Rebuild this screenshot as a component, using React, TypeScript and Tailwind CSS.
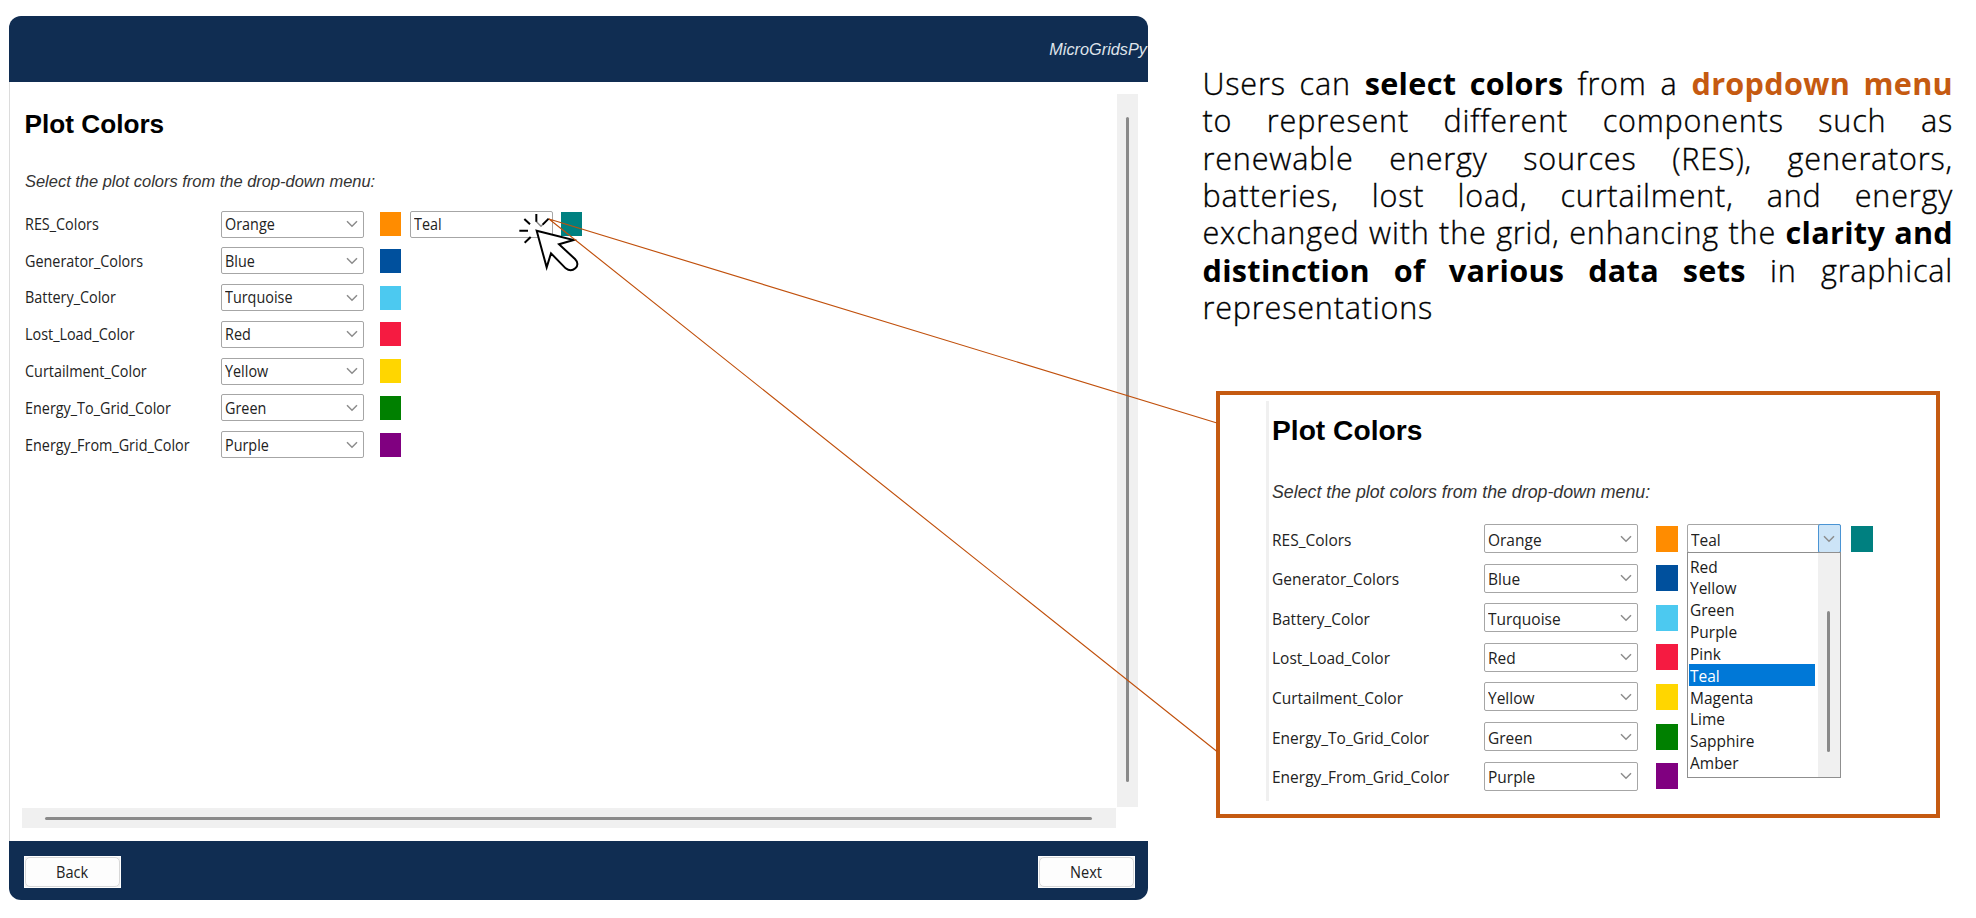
import type { ReactNode } from 'react';

const rows = [
  { label: 'RES_Colors', value: 'Orange', swatch: 'bg-[#ff8c00]' },
  { label: 'Generator_Colors', value: 'Blue', swatch: 'bg-[#00509d]' },
  { label: 'Battery_Color', value: 'Turquoise', swatch: 'bg-[#4cc9f0]' },
  { label: 'Lost_Load_Color', value: 'Red', swatch: 'bg-[#f51b41]' },
  { label: 'Curtailment_Color', value: 'Yellow', swatch: 'bg-[#ffd600]' },
  { label: 'Energy_To_Grid_Color', value: 'Green', swatch: 'bg-[#008000]' },
  { label: 'Energy_From_Grid_Color', value: 'Purple', swatch: 'bg-[#800080]' },
];

const options = ['Red', 'Yellow', 'Green', 'Purple', 'Pink', 'Teal', 'Magenta', 'Lime', 'Sapphire', 'Amber'];

function Label({ text }: { text: string }) {
  return <span className="inline-block origin-left scale-x-[0.928] whitespace-nowrap pt-px">{text}</span>;
}

function Chevron() {
  return (
    <svg className="h-[8px] w-[12px] shrink-0" viewBox="0 0 12 8" fill="none" stroke="#8c8c8c" strokeWidth="1.5">
      <path d="M1 1.3 6 6.3 11 1.3" />
    </svg>
  );
}

function Select({ value, large = false, open = false }: { value: string; large?: boolean; open?: boolean }) {
  return (
    <div
      className={
        'flex items-center justify-between rounded-[2px] border-[1.5px] border-[#a6a6a6] bg-white pl-[3px] ' +
        (large ? 'h-[29px] w-[154px]' : 'h-[27px] w-[143px]')
      }
    >
      <Label text={value} />
      {open ? (
        <div className="-my-px -mr-px flex h-[29px] w-[23px] items-center justify-center rounded-[2px] border-[1.5px] border-[#4a94d4] bg-[#cce4f7]">
          <Chevron />
        </div>
      ) : (
        <div className="mr-[4.5px] flex">
          <Chevron />
        </div>
      )}
    </div>
  );
}

function Menu() {
  return (
    <div className="absolute left-0 top-[28px] flex h-[225.5px] w-[154px] justify-between border-[1.5px] border-[#8f8f8f] bg-white">
      <div className="w-[127px] pl-px pt-[1.5px]">
        {options.map((o) => (
          <div
            key={o}
            className={
              'flex h-[21.85px] items-center pl-px ' + (o === 'Teal' ? 'bg-[#0078d7] text-white' : 'text-[#1a1a1a]')
            }
          >
            <Label text={o} />
          </div>
        ))}
      </div>
      <div className="flex w-[22px] justify-center bg-[#f0f0f0] pt-[58px]">
        <div className="h-[141px] w-[3px] rounded-full bg-[#8a8a8a]" />
      </div>
    </div>
  );
}

function MainRows() {
  return (
    <div className="text-[15.5px] text-[#222]">
      {rows.map((r, i) => (
        <div key={r.label} className="flex h-[36.8px] items-start">
          <div className="flex h-[27px] w-[196px] items-center">
            <Label text={r.label} />
          </div>
          <Select value={r.value} />
          <div className={'ml-[16.5px] mt-[1.5px] h-[24px] w-[20.5px] ' + r.swatch} />
          {i === 0 && (
            <>
              <div className="ml-[9px]">
                <Select value="Teal" />
              </div>
              <div className="ml-[8.5px] mt-[1.5px] h-[24px] w-[20.5px] bg-[#008080]" />
            </>
          )}
        </div>
      ))}
    </div>
  );
}

function DetailRows() {
  return (
    <div className="text-[16.7px] text-[#222]">
      {rows.map((r, i) => (
        <div key={r.label} className="flex h-[39.6px] items-start">
          <div className="flex h-[29px] w-[211.5px] items-center">
            <Label text={r.label} />
          </div>
          <Select value={r.value} large />
          <div className={'ml-[18px] mt-[1.5px] h-[26px] w-[22px] ' + r.swatch} />
          {i === 0 && (
            <>
              <div className="relative z-10 ml-[9px]">
                <Select value="Teal" large open />
                <Menu />
              </div>
              <div className="ml-[10px] mt-[1.5px] h-[26px] w-[22px] bg-[#008080]" />
            </>
          )}
        </div>
      ))}
    </div>
  );
}

function NavButton({ text }: { text: string }) {
  return (
    <div className="h-[32px] w-[97px] bg-[#f0f0f0] p-px outline-1 -outline-offset-1 outline-white">
      <div className="flex h-full w-full items-center justify-center rounded-[5px] border-[1.5px] border-[#d8d8d8] bg-[#fdfdfd] text-[15.5px] text-[#222]">
        <span className="inline-block scale-x-[0.94] pt-px">{text}</span>
      </div>
    </div>
  );
}

function AppWindow() {
  return (
    <div className="mt-[16px] flex h-[884px] w-[1139px] flex-col overflow-hidden rounded-[12px]">
      <div className="flex h-[65.5px] shrink-0 items-center justify-end bg-[#102d52] pr-[1px]">
        <span className="font-['Liberation_Sans',sans-serif] text-[16.3px] italic text-[#dfe3ea]">MicroGridsPy</span>
      </div>
      <div className="flex min-h-0 flex-1 flex-col border-l border-[#dcdcdc] bg-white pl-[12px] pt-[12.5px]">
        <div className="flex h-[712.5px] justify-between">
          <div className="pl-[2.5px]">
            <h1 className="mt-[14px] font-['Liberation_Sans',sans-serif] text-[26.2px] font-bold leading-[32px] text-black">
              Plot Colors
            </h1>
            <p className="mt-[31px] origin-left scale-x-[0.957] font-['Liberation_Sans',sans-serif] text-[17.2px] italic leading-[20px] text-[#333]">
              Select the plot colors from the drop-down menu:
            </p>
            <div className="mt-[19.5px]">
              <MainRows />
            </div>
          </div>
          <div className="mr-[10.5px] flex w-[20.5px] justify-center bg-[#f0f0f0] pt-[23px]">
            <div className="h-[665px] w-[3px] rounded-full bg-[#8a8a8a]" />
          </div>
        </div>
        <div className="mt-[1.5px] flex h-[20px] w-[1094px] items-center bg-[#f0f0f0] pl-[23px]">
          <div className="h-[3px] w-[1047px] rounded-full bg-[#8a8a8a]" />
        </div>
      </div>
      <div className="flex h-[59.5px] shrink-0 items-start justify-between bg-[#102d52] pl-[15px] pr-[13px] pt-[15.5px]">
        <NavButton text="Back" />
        <NavButton text="Next" />
      </div>
    </div>
  );
}

function Connectors() {
  return (
    <svg className="pointer-events-none absolute left-0 top-0 h-[918px] w-[1976px]" viewBox="0 0 1976 918" fill="none">
      <g transform="translate(380 190) scale(0.33333)" stroke="#000" strokeWidth="6" strokeLinecap="round">
        <path
          fill="#fff"
          strokeLinejoin="miter"
          d="M470 122 581 150 537 163 585 207C595 217 594 228 586 235 577 243 566 242 557 235L513 190 500 232Z"
        />
        <path strokeLinecap="butt" d="M469 72V95M433 87 450 103M418 122H444M434 158 452 141M506 86 488 104" />
      </g>
      <path d="M549 219 1217 423M549 219 1217 751.5" stroke="#c0500c" strokeWidth="1.15" />
    </svg>
  );
}

function Line({ children }: { children: ReactNode }) {
  return <span className="block whitespace-nowrap [text-align-last:justify] last:[text-align-last:left]">{children}</span>;
}

function Strong({ children, accent = false }: { children: ReactNode; accent?: boolean }) {
  return (
    <b className={'font-bold tracking-[0.3px] [-webkit-text-stroke:0] ' + (accent ? 'text-[#c55a11]' : 'text-black')}>
      {children}
    </b>
  );
}

export default function App() {
  return (
    <div className="relative flex h-[918px] w-[1976px] overflow-hidden bg-white pl-[9px] font-['Open_Sans','Noto_Sans',sans-serif]">
      <AppWindow />
      <div className="ml-[54px] flex w-[760px] flex-col pt-[65px]">
        <p className="w-[751px] pl-[0.5px] text-[30.6px] font-light leading-[37.35px] tracking-[0.8px] text-black [-webkit-text-stroke:0.35px_black]">
          <Line>
            Users can <Strong>select colors</Strong> from a <Strong accent>dropdown menu</Strong>
          </Line>
          <Line>to represent different components such as</Line>
          <Line>renewable energy sources (RES), generators,</Line>
          <Line>batteries, lost load, curtailment, and energy</Line>
          <Line>
            exchanged with the grid, enhancing the <Strong>clarity and</Strong>
          </Line>
          <Line>
            <Strong>distinction of various data sets</Strong> in graphical
          </Line>
          <Line>representations</Line>
        </p>
        <div className="ml-[14px] mt-[64.5px] h-[427px] w-[724px] border-4 border-[#c55a11] bg-white pl-[46px] pt-[6px]">
          <div className="h-[400px] border-l-[3px] border-[#f0f0f0] pl-[3px]">
            <h2 className="pt-[13.5px] font-['Liberation_Sans',sans-serif] text-[28.2px] font-bold leading-[32px] text-black">
              Plot Colors
            </h2>
            <p className="mt-[35.5px] origin-left scale-x-[0.96] font-['Liberation_Sans',sans-serif] text-[18.5px] italic leading-[20px] text-[#333]">
              Select the plot colors from the drop-down menu:
            </p>
            <div className="mt-[22.2px]">
              <DetailRows />
            </div>
          </div>
        </div>
      </div>
      <Connectors />
    </div>
  );
}
